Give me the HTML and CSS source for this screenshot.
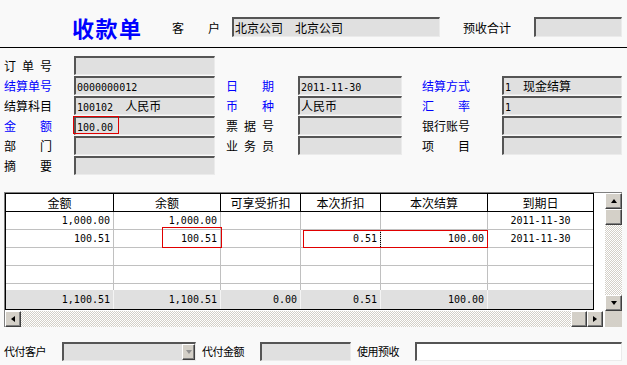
FILE: index.html
```html
<!DOCTYPE html>
<html lang="zh-CN">
<head>
    <meta charset="UTF-8">
    <title>收款单</title>
    <link rel="stylesheet" href="styles.css">
</head>
<body>

<div class="top">
    <div class="title">收款单</div>
    <div class="lbl">客 户</div>
    <div class="box cust"><span>北京公司</span><span class="gap">北京公司</span></div>
    <div class="lbl sum-lbl">预收合计</div>
    <div class="box sum"></div>
</div>

<div class="form">
    <div class="lbl">订 单 号</div><div class="box"></div>
    <div></div><div></div><div></div><div></div><div></div><div></div>

    <div class="lbl blue">结算单号</div><div class="box"><span class="n">0000000012</span></div>
    <div></div><div class="lbl blue">日 期</div><div class="box"><span class="n">2011-11-30</span></div>
    <div></div><div class="lbl blue">结算方式</div><div class="box"><span class="n">1</span><span class="gap2">现金结算</span></div>

    <div class="lbl">结算科目</div><div class="box"><span class="n">100102</span><span class="gap">人民币</span></div>
    <div></div><div class="lbl blue">币 种</div><div class="box">人民币</div>
    <div></div><div class="lbl blue">汇 率</div><div class="box"><span class="n">1</span></div>

    <div class="lbl blue">金 额</div><div class="box mark"><span class="n">100.00</span><i class="redbox"></i></div>
    <div></div><div class="lbl">票 据 号</div><div class="box"></div>
    <div></div><div class="lbl">银行账号</div><div class="box"></div>

    <div class="lbl">部 门</div><div class="box"></div>
    <div></div><div class="lbl">业 务 员</div><div class="box"></div>
    <div></div><div class="lbl">项 目</div><div class="box"></div>

    <div class="lbl">摘 要</div><div class="box"></div>
    <div></div><div></div><div></div><div></div><div></div><div></div>
</div>

<div class="gridbox">
    <div class="gridtop">
        <div class="tablewrap">
            <div class="grid">
                <div class="row head">
                    <div class="c">金额</div><div class="c">余额</div><div class="c">可享受折扣</div>
                    <div class="c">本次折扣</div><div class="c">本次结算</div><div class="c">到期日</div>
                </div>
                <div class="row">
                    <div class="c">1,000.00</div><div class="c">1,000.00</div><div class="c"></div>
                    <div class="c"></div><div class="c"></div><div class="c date">2011-11-30</div>
                </div>
                <div class="row">
                    <div class="c">100.51</div><div class="c">100.51</div><div class="c"></div>
                    <div class="c">0.51</div><div class="c focus">100.00</div><div class="c date">2011-11-30</div>
                </div>
                <div class="row">
                    <div class="c"></div><div class="c"></div><div class="c"></div>
                    <div class="c"></div><div class="c"></div><div class="c"></div>
                </div>
                <div class="row">
                    <div class="c"></div><div class="c"></div><div class="c"></div>
                    <div class="c"></div><div class="c"></div><div class="c"></div>
                </div>
                <div class="row filler">
                    <div class="c"></div><div class="c"></div><div class="c"></div>
                    <div class="c"></div><div class="c"></div><div class="c"></div>
                </div>
                <div class="row total">
                    <div class="c">1,100.51</div><div class="c">1,100.51</div><div class="c">0.00</div>
                    <div class="c">0.51</div><div class="c">100.00</div><div class="c"></div>
                </div>
            </div>
            <i class="sel sel-a"></i>
            <i class="sel sel-b"></i>
        </div>
        <div class="vscroll">
            <div class="btn"><i class="arr up"></i></div>
            <div class="btn"></div>
            <div class="track"></div>
            <div class="btn"><i class="arr down"></i></div>
        </div>
    </div>
    <div class="gridbottom">
        <div class="hscroll">
            <div class="btn"><i class="arr left"></i></div>
            <div class="track"></div>
            <div class="btn"></div>
            <div class="btn"><i class="arr right"></i></div>
            <div class="pad"></div>
        </div>
        <div class="corner"></div>
    </div>
</div>

<div class="bottom">
    <div class="slbl">代付客户</div>
    <div class="box combo"><div class="btn drop"><i class="arr down gray"></i></div></div>
    <div class="slbl mid">代付金额</div>
    <div class="box pay"></div>
    <div class="slbl mid">使用预收</div>
    <div class="box use"></div>
</div>

</body>
</html>
```

FILE: styles.css
```css
body {
    margin: 0;
    width: 627px;
    height: 365px;
    overflow: hidden;
    background-color: #f9f9f9;
    font-family: "Noto Sans CJK SC", sans-serif;
    font-size: 12px;
    color: #000;
}
.n {
    font-family: "DejaVu Sans Mono", monospace;
    font-size: 10px;
}
.blue {
    color: #0000ff;
}
.lbl {
    width: 48px;
    line-height: 19px;
    text-align: justify;
    text-align-last: justify;
    white-space: nowrap;
}
.box {
    box-sizing: border-box;
    height: 19px;
    line-height: 16px;
    padding-left: 1px;
    background-color: #e0e0e0;
    border-style: solid;
    border-width: 2px 1px 1px 2px;
    border-color: #555 #ebebeb #ebebeb #555;
    white-space: nowrap;
    overflow: hidden;
}
.gap {
    margin-left: 12px;
}
.gap2 {
    margin-left: 12px;
}

/* header */
.top {
    display: flex;
    align-items: center;
    height: 40px;
    padding-top: 7px;
    border-bottom: 1px solid #000;
}
.title {
    width: 100px;
    margin-left: 72px;
    color: #0000ff;
    font-size: 22px;
    font-weight: bold;
    letter-spacing: 1.5px;
}
.top .box {
    height: 20px;
    line-height: 17px;
}
.cust {
    width: 208px;
    margin-left: 12px;
}
.sum-lbl {
    margin-left: 23px;
}
.sum {
    width: 88px;
    margin-left: 23px;
}

/* form */
.form {
    display: grid;
    grid-template-columns: 70px 141px 11px 72px 104px 20px 80px 120px;
    grid-auto-rows: 19px;
    row-gap: 1px;
    padding: 8px 0 0 4px;
}
.mark {
    position: relative;
    overflow: visible;
}
.redbox {
    position: absolute;
    left: -3px;
    top: -2px;
    width: 46px;
    height: 18px;
    box-sizing: border-box;
    border: 1px solid #e00000;
}

/* grid */
.gridbox {
    width: 617px;
    margin: 17px 0 0 4px;
    border-top: 1px solid #808080;
    border-left: 1px solid #808080;
    background-color: #fff;
}
.gridtop {
    display: flex;
    height: 118px;
}
.tablewrap {
    position: relative;
    width: 600px;
}
.grid {
    width: 587px;
    border: 1px solid #000;
}
.row {
    display: flex;
    box-sizing: border-box;
    height: 18px;
    border-bottom: 1px solid #c0c0c0;
}
.c {
    box-sizing: border-box;
    border-right: 1px solid #c0c0c0;
    padding-right: 3px;
    text-align: right;
    line-height: 17px;
    font-family: "DejaVu Sans Mono", monospace;
    font-size: 10px;
    white-space: nowrap;
    overflow: hidden;
}
.c:nth-child(1) { width: 108px; }
.c:nth-child(2) { width: 107px; }
.c:nth-child(3) { width: 80px; }
.c:nth-child(4) { width: 80px; }
.c:nth-child(5) { width: 107px; }
.c:nth-child(6) { width: 105px; border-right: none; }
.c.date {
    text-align: center;
    padding-right: 0;
}
.c.focus {
    border-left: 1px dotted #000;
    margin-left: -1px;
    width: 108px;
}
.head {
    border-bottom-color: #000;
}
.head .c {
    border-right-color: #000;
    text-align: center;
    padding-right: 0;
    font-family: "Noto Sans CJK SC", sans-serif;
    font-size: 12px;
}
.filler {
    height: 6px;
    border-bottom: none;
}
.total {
    height: 19px;
    border-bottom: none;
    background-color: #e0e0e0;
}
.total .c {
    line-height: 19px;
    border-right-color: #f4f4f4;
}
.sel {
    position: absolute;
    box-sizing: border-box;
    border: 1px solid #e00000;
}
.sel-a {
    left: 157px;
    top: 34px;
    width: 60px;
    height: 21px;
}
.sel-b {
    left: 298px;
    top: 37px;
    width: 185px;
    height: 18px;
}

/* scrollbars */
.btn {
    box-sizing: border-box;
    display: flex;
    align-items: center;
    justify-content: center;
    width: 16px;
    height: 16px;
    background-color: #d4d0c8;
    border: 1px solid;
    border-color: #fff #404040 #404040 #fff;
    box-shadow: inset -1px -1px #808080;
}
.track {
    flex: 1;
    background-color: #fff;
    background-image: repeating-conic-gradient(#d4d0c8 0 25%, #fff 0 50%);
    background-size: 2px 2px;
}
.vscroll {
    display: flex;
    flex-direction: column;
    width: 17px;
}
.vscroll .btn {
    width: 17px;
}
.gridbottom {
    display: flex;
    height: 16px;
}
.hscroll {
    display: flex;
    width: 600px;
}
.hscroll .pad {
    width: 2px;
}
.corner {
    width: 17px;
    background-color: #d4d0c8;
}
.arr {
    width: 0;
    height: 0;
    border-style: solid;
    border-color: transparent;
}
.arr.up {
    border-width: 0 3.5px 4px;
    border-bottom-color: #000;
}
.arr.down {
    border-width: 4px 3.5px 0;
    border-top-color: #000;
}
.arr.left {
    border-width: 3.5px 4px 3.5px 0;
    border-right-color: #000;
}
.arr.right {
    border-width: 3.5px 0 3.5px 4px;
    border-left-color: #000;
}
.arr.gray {
    border-top-color: #909090;
}

/* bottom line */
.bottom {
    display: flex;
    align-items: center;
    margin-top: 15px;
    padding-left: 4px;
}
.slbl {
    width: 58px;
    font-size: 11px;
    line-height: 19px;
    letter-spacing: -0.5px;
    white-space: nowrap;
}
.slbl.mid {
    margin-left: 6px;
}
.combo {
    display: flex;
    justify-content: flex-end;
    width: 134px;
    padding: 0;
}
.drop {
    width: 13px;
    height: 16px;
}
.pay {
    width: 91px;
}
.use {
    width: 207px;
    background-color: #fff;
}
```
